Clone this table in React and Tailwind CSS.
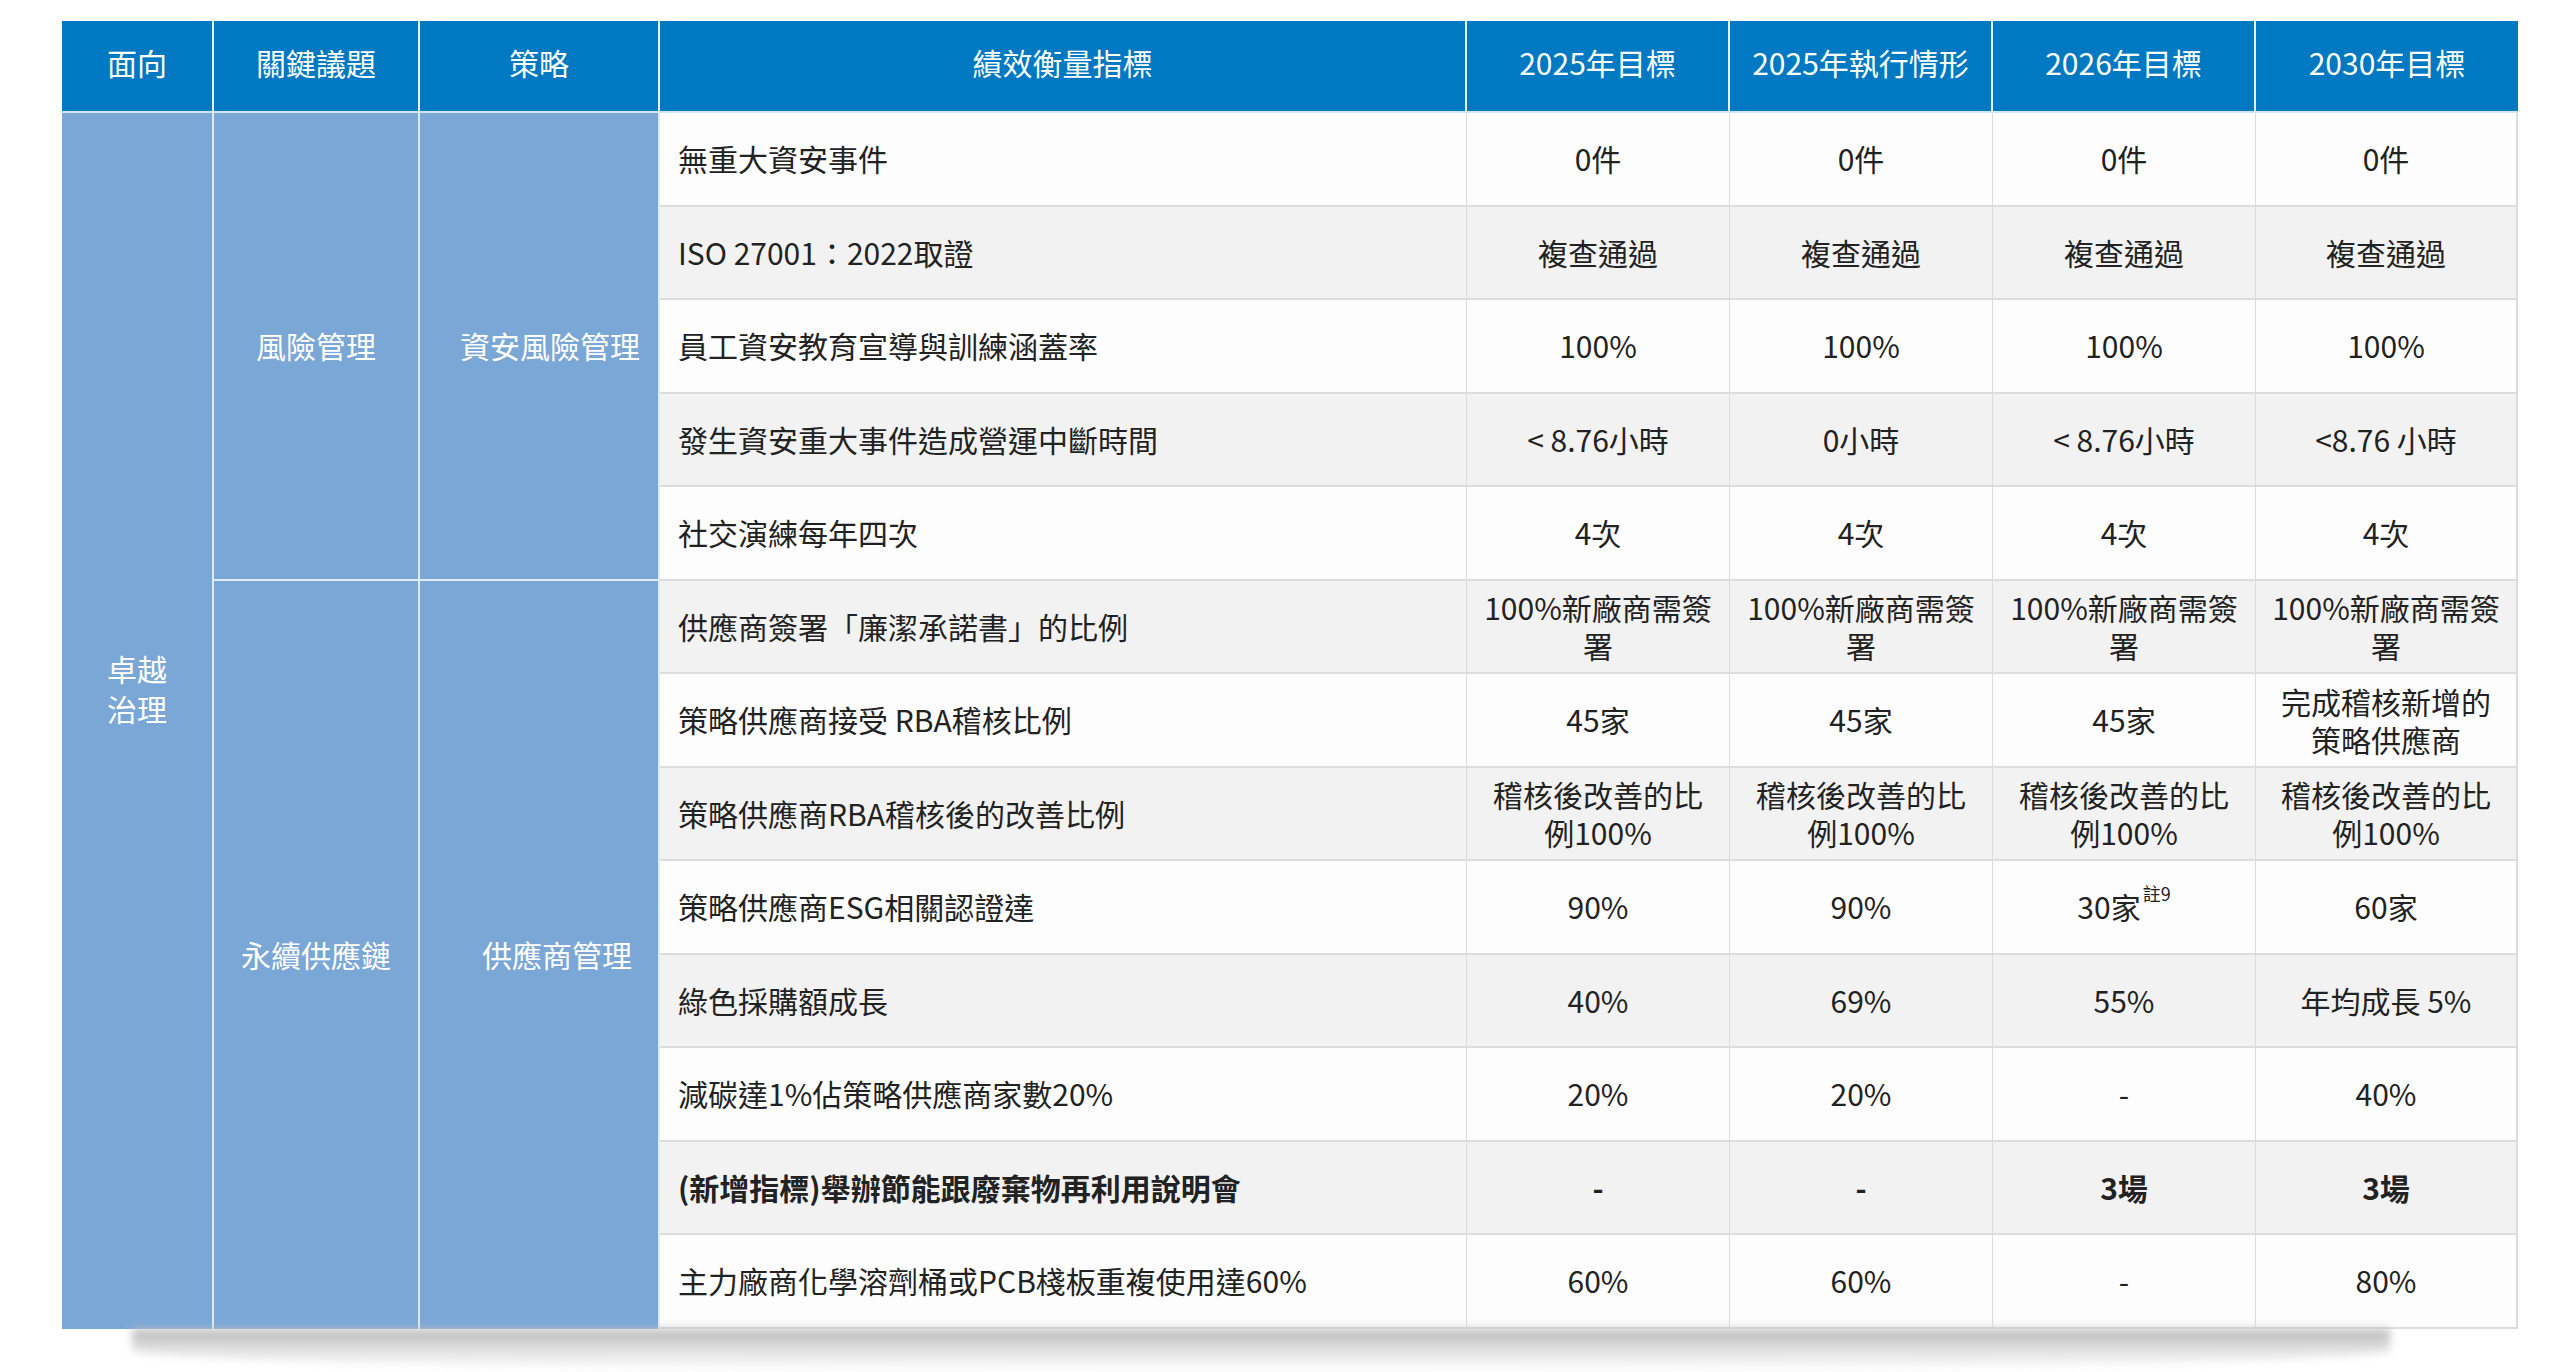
import React from 'react';

const headers = ['面向', '關鍵議題', '策略', '績效衡量指標', '2025年目標', '2025年執行情形', '2026年目標', '2030年目標'];

const rows = [
  { kpi: '無重大資安事件', vals: ['0件', '0件', '0件', '0件'] },
  { kpi: 'ISO 27001：2022取證', vals: ['複查通過', '複查通過', '複查通過', '複查通過'] },
  { kpi: '員工資安教育宣導與訓練涵蓋率', vals: ['100%', '100%', '100%', '100%'] },
  { kpi: '發生資安重大事件造成營運中斷時間', vals: ['< 8.76小時', '0小時', '< 8.76小時', '<8.76 小時'] },
  { kpi: '社交演練每年四次', vals: ['4次', '4次', '4次', '4次'] },
  {
    kpi: '供應商簽署「廉潔承諾書」的比例',
    vals: [['100%新廠商需簽', '署'], ['100%新廠商需簽', '署'], ['100%新廠商需簽', '署'], ['100%新廠商需簽', '署']],
  },
  { kpi: '策略供應商接受 RBA稽核比例', vals: ['45家', '45家', '45家', ['完成稽核新增的', '策略供應商']] },
  {
    kpi: '策略供應商RBA稽核後的改善比例',
    vals: [['稽核後改善的比', '例100%'], ['稽核後改善的比', '例100%'], ['稽核後改善的比', '例100%'], ['稽核後改善的比', '例100%']],
  },
  { kpi: '策略供應商ESG相關認證達', vals: ['90%', '90%', 'note', '60家'] },
  { kpi: '綠色採購額成長', vals: ['40%', '69%', '55%', '年均成長 5%'] },
  { kpi: '減碳達1%佔策略供應商家數20%', vals: ['20%', '20%', '-', '40%'] },
  { kpi: '(新增指標)舉辦節能跟廢棄物再利用說明會', vals: ['-', '-', '3場', '3場'], bold: true },
  { kpi: '主力廠商化學溶劑桶或PCB棧板重複使用達60%', vals: ['60%', '60%', '-', '80%'] },
];

const Value = ({ v }) => {
  if (v === 'note') {
    return (
      <>
        30家<sup className="text-[18px] leading-none align-[9px] ml-[2px]">註9</sup>
      </>
    );
  }
  if (Array.isArray(v)) {
    return (
      <span className="block leading-[38px]">
        {v[0]}
        <br />
        {v[1]}
      </span>
    );
  }
  return v;
};

const blueCell = 'bg-[#7ba7d7] text-white text-center align-middle border-r-2 border-r-[#dcedf9]';

export default function App() {
  return (
    <div
      className="w-[2560px] h-[1372px] overflow-hidden bg-white pt-[21px] pl-[62px] text-[30px] text-[#222]"
      style={{ fontFamily: '"Noto Sans CJK TC", "Noto Sans", sans-serif' }}
    >
      <table className="table-fixed w-[2456px] border-separate border-spacing-0">
        <colgroup>
          <col className="w-[152px]" />
          <col className="w-[206px]" />
          <col className="w-[240px]" />
          <col className="w-[807px]" />
          <col className="w-[263px]" />
          <col className="w-[263px]" />
          <col className="w-[263px]" />
          <col className="w-[262px]" />
        </colgroup>
        <thead>
          <tr className="h-[92px]">
            {headers.map((h, i) => (
              <th
                key={h}
                className={`bg-[#0079c2] text-white font-normal text-center align-middle pb-[8px] border-b-2 border-b-[#cfe9f8] ${
                  i < headers.length - 1 ? 'border-r-2 border-r-[#e3f2fb]' : ''
                }`}
              >
                {h}
              </th>
            ))}
          </tr>
        </thead>
        <tbody>
          {rows.map((r, i) => (
            <tr key={r.kpi} className="h-[93.5px]">
              {i === 0 && (
                <>
                  <td rowSpan={13} className={`${blueCell} pb-[66px] leading-[40px]`}>
                    卓越
                    <br />
                    治理
                  </td>
                  <td rowSpan={5} className={`${blueCell} border-b-2 border-b-[#dcedf9]`}>
                    風險管理
                  </td>
                  <td rowSpan={5} className={`${blueCell} border-r-0 border-b-2 border-b-[#dcedf9] pl-[22px]`}>
                    資安風險管理
                  </td>
                </>
              )}
              {i === 5 && (
                <>
                  <td rowSpan={8} className={blueCell}>
                    永續供應鏈
                  </td>
                  <td rowSpan={8} className={`${blueCell} border-r-0 pl-[36px]`}>
                    供應商管理
                  </td>
                </>
              )}
              <td
                className={`pl-[18px] align-middle border-r border-r-[#dcdcdc] border-b-2 border-b-[#dddddd] ${
                  i % 2 === 1 ? 'bg-[#f2f2f2]' : 'bg-[#fdfdfd]'
                } ${r.bold ? 'font-bold' : ''}`}
              >
                {r.kpi}
              </td>
              {r.vals.map((v, j) => (
                <td
                  key={j}
                  className={`text-center align-middle border-b-2 border-b-[#dddddd] ${
                    j === 3 ? 'border-r-2 border-r-[#dcdcdc]' : 'border-r border-r-[#dcdcdc]'
                  } ${i % 2 === 1 ? 'bg-[#f2f2f2]' : 'bg-[#fdfdfd]'} ${r.bold ? 'font-bold' : ''}`}
                >
                  <Value v={v} />
                </td>
              ))}
            </tr>
          ))}
        </tbody>
      </table>
      <div className="ml-[70px] mr-[170px] h-[42px] rounded-b-[50%] bg-gradient-to-b from-[#b9b9b9] via-[#e2e2e2] to-white/0 blur-[4px]" />
    </div>
  );
}
